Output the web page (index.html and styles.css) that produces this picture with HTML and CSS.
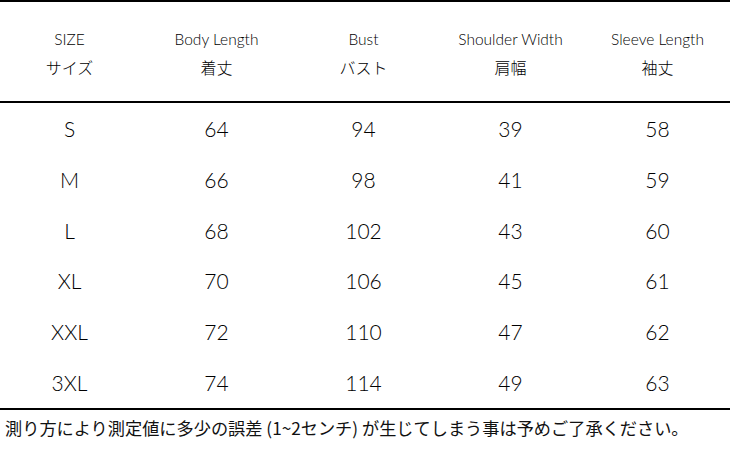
FILE: index.html
```html
<!DOCTYPE html>
<html lang="ja">
<head>
<meta charset="utf-8">
<link rel="stylesheet" href="styles.css">
</head>
<body>
<div class="sheet">
  <div class="row head">
    <div class="cell"><span class="en">SIZE</span><span class="ja">サイズ</span></div>
    <div class="cell"><span class="en">Body Length</span><span class="ja">着丈</span></div>
    <div class="cell"><span class="en">Bust</span><span class="ja">バスト</span></div>
    <div class="cell"><span class="en">Shoulder Width</span><span class="ja">肩幅</span></div>
    <div class="cell"><span class="en">Sleeve Length</span><span class="ja">袖丈</span></div>
  </div>
  <div class="body">
    <div class="row"><div class="cell">S</div><div class="cell">64</div><div class="cell">94</div><div class="cell">39</div><div class="cell">58</div></div>
    <div class="row"><div class="cell">M</div><div class="cell">66</div><div class="cell">98</div><div class="cell">41</div><div class="cell">59</div></div>
    <div class="row"><div class="cell">L</div><div class="cell">68</div><div class="cell">102</div><div class="cell">43</div><div class="cell">60</div></div>
    <div class="row"><div class="cell">XL</div><div class="cell">70</div><div class="cell">106</div><div class="cell">45</div><div class="cell">61</div></div>
    <div class="row"><div class="cell">XXL</div><div class="cell">72</div><div class="cell">110</div><div class="cell">47</div><div class="cell">62</div></div>
    <div class="row"><div class="cell">3XL</div><div class="cell">74</div><div class="cell">114</div><div class="cell">49</div><div class="cell">63</div></div>
  </div>
  <p class="note">測り方により測定値に多少の誤差 (1~2センチ) が生じてしまう事は予めご了承ください。</p>
</div>
</body>
</html>
```

FILE: styles.css
```css
html, body {
  margin: 0;
  padding: 0;
  background: #fff;
}
body {
  width: 730px;
  height: 450px;
  overflow: hidden;
  font-family: Lato, "Noto Sans CJK JP", sans-serif;
  font-weight: 300;
  color: #000;
}
.sheet {
  border-top: 2px solid #000;
}
.row {
  display: grid;
  grid-template-columns: repeat(5, 147px);
  margin-left: -4px;
}
.cell {
  display: flex;
  align-items: center;
  justify-content: center;
}
.head {
  height: 99px;
  border-bottom: 2px solid #000;
}
.head .cell {
  flex-direction: column;
  padding-top: 2px;
  box-sizing: border-box;
}
.en {
  font-size: 15.5px;
  font-weight: 300;
  line-height: 28px;
  color: #000;
}
.ja {
  font-family: "Noto Sans CJK JP", sans-serif;
  font-weight: 300;
  font-size: 16px;
  line-height: 28px;
  color: #000;
}
.body {
  display: grid;
  grid-template-rows: repeat(6, 1fr);
  height: 305px;
  border-bottom: 2px solid #000;
}
.body .cell {
  font-size: 21px;
}
.note {
  margin: 0;
  padding: 5px 0 0 5px;
  font-family: "Noto Sans CJK JP", sans-serif;
  font-weight: 400;
  font-size: 17.2px;
  line-height: 26px;
  color: #111;
}
```
